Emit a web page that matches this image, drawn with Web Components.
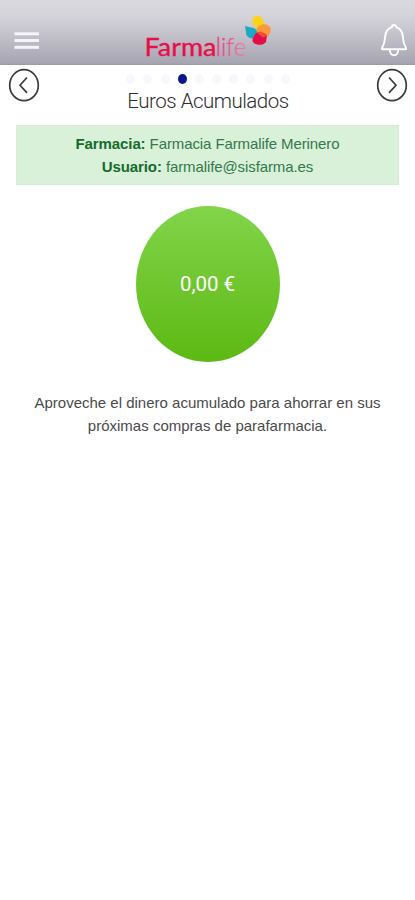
<!DOCTYPE html>
<html lang="es">
<head>
<meta charset="utf-8">
<meta name="viewport" content="width=device-width, initial-scale=1">
<title>Farmalife</title>
<style>
    body {
        margin: 0;
        background: #fff;
        font-family: "Liberation Sans", Arial, sans-serif;
        color: #4a4a4a;
    }
</style>
</head>
<body>
<fl-header></fl-header>
<fl-pager zl-total="10" zl-active="3">Euros Acumulados</fl-pager>
<fl-info>
    <fl-line><b>Farmacia:</b> Farmacia Farmalife Merinero</fl-line>
    <fl-line><b>Usuario:</b> farmalife@sisfarma.es</fl-line>
</fl-info>
<fl-balance>0,00 €</fl-balance>
<fl-note>
    <fl-line>Aproveche el dinero acumulado para ahorrar en sus</fl-line>
    <fl-line>próximas compras de parafarmacia.</fl-line>
</fl-note>

<script>
    class Base extends HTMLElement {
        connectedCallback() {
            const template = document.createElement('template');
            template.innerHTML = this.render();
            this.attachShadow({ mode: 'open' });
            this.shadowRoot.appendChild(template.content.cloneNode(true));
        }
    }

    class Header extends Base {
        render() {
            return `
                <style>
                    :host {
                        display: flex;
                        justify-content: space-between;
                        align-items: flex-start;
                        box-sizing: border-box;
                        height: 65px;
                        background: linear-gradient(#dad9df 0, #d3d2d8 18px, #a8a5b3 63px, #9b98a3 65px);
                    }
                    svg { display: block; }
                    text { font-family: Lato, sans-serif; font-size: 24.5px; }
                </style>
                <svg width="50" height="65" fill="#f5f4f8">
                    <rect x="14.5" y="32.300" width="24.5" height="3"/>
                    <rect x="14.5" y="39" width="24.5" height="3"/>
                    <rect x="14.5" y="45.800" width="24.5" height="3"/>
                </svg>
                <svg width="140" height="65" viewBox="140 0 140 65">
                    <defs>
                        <linearGradient id="word" gradientUnits="userSpaceOnUse" x1="218" y1="0" x2="246" y2="0">
                            <stop offset="0" stop-color="#e6427a"/>
                            <stop offset="1" stop-color="#ec7fa8"/>
                        </linearGradient>
                    </defs>
                    <text x="144.500" y="56" font-weight="400" fill="#e80f48" stroke="#e80f48" stroke-width=".35" textLength="72" lengthAdjust="spacingAndGlyphs">Farma</text>
                    <text x="215.800" y="56" font-weight="300" fill="url(#word)" stroke="url(#word)" stroke-width=".3" textLength="30.500" lengthAdjust="spacingAndGlyphs">life</text>
                    <path d="M252.500 20c-.5-3 2-4 5.500-4s6 4 6.500 9l-3 3.500-5-.5c-2-1-4-4-4-8z" fill="#ffd21c"/>
                    <path d="M245 26l6 1.500c4 .5 6 2 6 4.500l-3.500 6.500c-2 .5-5-1-7-3z" fill="#1ba9c4"/>
                    <path d="M256.500 29c3-5.500 9.500-6 13-2.500 2 2.500 1.500 6-1.500 10-5 0-9-1-11-4z" fill="#fb983c"/>
                    <path d="M256 33c3-2 8-1 11 2.500l-1 6.500c-3 3.500-8 3.500-11.500 1.500-3-2-2.500-5 1.500-10.500z" fill="#e50d46"/>
                    <path d="M256.500 32.500l4.500-1 6 4.500-4 1.500z" fill="#ef513b"/>
                </svg>
                <svg width="45" height="65" viewBox="370 0 45 65" fill="none" stroke="#fff" stroke-width="1.900" stroke-linejoin="round">
                    <path d="M394 25c1.300 0 2 .8 2.200 2.200 4.300 1.500 6.300 5 6.600 9.300.3 5.500.8 7.500 3.200 11.500q.5 1.200-.8 1.200h-22.400q-1.300 0-.8-1.200c2.400-4 2.900-6 3.200-11.500.3-4.300 2.300-7.800 6.600-9.300.2-1.400.9-2.200 2.200-2.200z"/>
                    <path d="M389.800 50c0 3 1.700 5.300 4.200 5.300s4.200-2.300 4.200-5.300"/>
                </svg>
            `;
        }
    }

    class Pager extends Base {
        render() {
            const total = Number(this.getAttribute('zl-total'));
            const active = Number(this.getAttribute('zl-active'));
            let dots = '';
            for (let i = 0; i < total; i++) {
                dots += `<i class="${i === active ? 'on' : ''}"></i>`;
            }
            return `
                <style>
                    :host {
                        display: flex;
                        justify-content: space-between;
                        height: 60px;
                    }
                    svg { display: block; fill: none; stroke: #3b3b3b; stroke-width: 1.7; }
                    .middle {
                        display: flex;
                        flex-direction: column;
                        align-items: center;
                        padding: 9px 0 0 1px;
                    }
                    .dots { display: flex; gap: 8.200px; }
                    i { width: 9px; height: 10px; border-radius: 50%; background: #f8f8fb; }
                    i.on { background: #0c1590; }
                    .title {
                        margin-top: 5px;
                        font-family: Roboto, sans-serif;
                        font-size: 20.500px;
                        font-weight: 300;
                        letter-spacing: -.5px;
                        line-height: 24px;
                        white-space: nowrap;
                        color: #2e2e2e;
                    }
                </style>
                <svg width="48" height="40"><ellipse cx="24" cy="20.200" rx="14.300" ry="15.500"/><path d="M27 12.500l-7 7.700 7 7.700"/></svg>
                <div class="middle">
                    <div class="dots">${dots}</div>
                    <div class="title"><slot></slot></div>
                </div>
                <svg width="48" height="40"><ellipse cx="25" cy="20.200" rx="14.300" ry="15.500"/><path d="M22 12.500l7 7.700-7 7.700"/></svg>
            `;
        }
    }

    class Info extends Base {
        render() {
            return `
                <style>
                    :host {
                        display: block;
                        box-sizing: border-box;
                        height: 60px;
                        margin: 0 16px;
                        padding-top: 6px;
                        background: #d9f0d9;
                        border: 1px solid #d5edd3;
                        color: #33794c;
                        font-size: 15px;
                        letter-spacing: -.1px;
                    }
                    ::slotted(*) { line-height: 23px; }
                </style>
                <slot></slot>
            `;
        }
    }

    class Line extends Base {
        render() {
            return `
                <style>
                    :host { display: block; text-align: center; white-space: nowrap; }
                    ::slotted(b) { color: #166b2c; }
                </style>
                <slot></slot>
            `;
        }
    }

    class Balance extends Base {
        render() {
            return `
                <style>
                    :host {
                        display: flex;
                        align-items: center;
                        justify-content: center;
                        width: 144px;
                        height: 156px;
                        margin: 20.500px auto 0;
                        border-radius: 50%;
                        background: linear-gradient(#82d44a, #5cb913);
                        color: #fff;
                        font-family: Roboto, sans-serif;
                        font-size: 20.500px;
                    }
                </style>
                <slot></slot>
            `;
        }
    }

    class Note extends Base {
        render() {
            return `
                <style>
                    :host { display: block; margin-top: 29.500px; font-size: 15px; line-height: 23px; }
                </style>
                <slot></slot>
            `;
        }
    }

    window.customElements.define('fl-header', Header);
    window.customElements.define('fl-pager', Pager);
    window.customElements.define('fl-info', Info);
    window.customElements.define('fl-line', Line);
    window.customElements.define('fl-balance', Balance);
    window.customElements.define('fl-note', Note);
</script>
</body>
</html>
